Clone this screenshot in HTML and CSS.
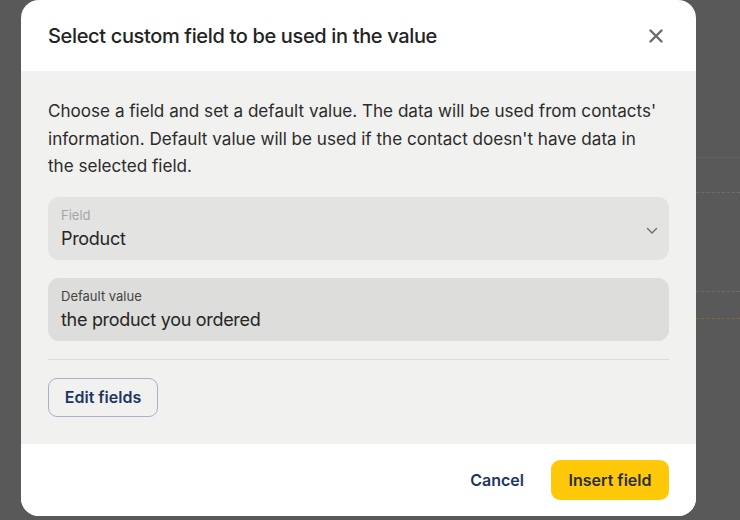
FILE: index.html
```html
<!DOCTYPE html>
<html lang="en">
<head>
<meta charset="utf-8">
<title>Select custom field</title>
<link rel="stylesheet" href="styles.css">
</head>
<body>
<div class="page">
  <div class="line solid l1"></div>
  <div class="line dashed l2"></div>
  <div class="line dashed l3"></div>
  <div class="line dashed orange l4"></div>
</div>

<div class="modal" role="dialog" aria-labelledby="modal-title">
  <header class="modal-header">
    <h2 id="modal-title" class="modal-title">Select custom field to be used in the value</h2>
    <button class="close-btn" aria-label="Close">
      <svg width="14" height="14" viewBox="0 0 14 14" aria-hidden="true">
        <path d="M1.5 1.5 L12.5 12.5 M12.5 1.5 L1.5 12.5" stroke="#6b6b6b" stroke-width="2.4" stroke-linecap="round" fill="none"/>
      </svg>
    </button>
  </header>

  <div class="modal-body">
    <p class="intro">Choose a field and set a default value. The data will be used from contacts' information. Default value will be used if the contact doesn't have data in the selected field.</p>

    <div class="input-box select-box">
      <div class="input-content">
        <span class="input-label muted">Field</span>
        <span class="input-value">Product</span>
      </div>
      <svg class="chevron" width="12" height="8" viewBox="0 0 12 8" aria-hidden="true">
        <path d="M1.5 1.5 L6 6 L10.5 1.5" stroke="#6e6e6e" stroke-width="1.4" stroke-linecap="round" stroke-linejoin="round" fill="none"/>
      </svg>
    </div>

    <div class="input-box text-box">
      <div class="input-content">
        <span class="input-label">Default value</span>
        <span class="input-value">the product you ordered</span>
      </div>
    </div>

    <div class="divider"></div>

    <div class="body-actions">
      <button class="btn-outline">Edit fields</button>
    </div>
  </div>

  <footer class="modal-footer">
    <button class="btn-text">Cancel</button>
    <button class="btn-primary">Insert field</button>
  </footer>
</div>
</body>
</html>
```

FILE: styles.css
```css
* {
  box-sizing: border-box;
}

html, body {
  margin: 0;
  padding: 0;
}

body {
  width: 740px;
  height: 520px;
  overflow: hidden;
  background: #595959;
  font-family: Inter, "Noto Sans", "Liberation Sans", sans-serif;
  position: relative;
}

.page {
  display: flex;
  flex-direction: column;
  padding-left: 600px;
}

.line {
  height: 1px;
  width: 140px;
}

.line.solid {
  background: #606060;
}

.line.dashed {
  border-top: 1px dashed #6e6e6e;
}

.line.dashed.orange {
  border-top-color: #7d6a36;
}

.l1 { margin-top: 157px; }
.l2 { margin-top: 34px; }
.l3 { margin-top: 98px; }
.l4 { margin-top: 26px; }

.modal {
  position: absolute;
  left: 21px;
  top: 0;
  width: 675px;
  height: 516px;
  background: #fff;
  border-radius: 18px;
  overflow: hidden;
  display: flex;
  flex-direction: column;
}

.modal-header {
  height: 71px;
  padding: 0 27px;
  display: flex;
  align-items: center;
  justify-content: space-between;
  flex-shrink: 0;
}

.modal-title {
  margin: 0;
  font-size: 20px;
  font-weight: 500;
  color: #232323;
  letter-spacing: -0.35px;
}

.close-btn {
  border: 0;
  background: none;
  padding: 0;
  width: 14px;
  height: 14px;
  margin-right: 6px;
  display: flex;
  cursor: pointer;
}

.modal-body {
  background: #f1f1ef;
  padding: 26px 27px 27px;
  display: flex;
  flex-direction: column;
  flex-shrink: 0;
}

.intro {
  margin: 0 0 17px;
  max-width: 612px;
  font-size: 17.1px;
  line-height: 27.5px;
  color: #2b2b2b;
}

.input-box {
  height: 63px;
  border-radius: 11px;
  padding: 10px 11px 0 13px;
  display: flex;
  align-items: flex-start;
  justify-content: space-between;
}

.select-box {
  background: #e3e3e1;
  margin-bottom: 18px;
}

.text-box {
  background: #dddddb;
}

.input-content {
  display: flex;
  flex-direction: column;
  gap: 3px;
}

.input-label {
  font-size: 13px;
  line-height: 16px;
  color: #444;
}

.input-label.muted {
  color: #a6a6a6;
}

.input-value {
  font-size: 18px;
  line-height: 26px;
  color: #262626;
  letter-spacing: -0.3px;
}

.chevron {
  margin-top: 20px;
}

.divider {
  height: 1px;
  background: #dcdcda;
  margin: 18px 0;
}

.body-actions {
  display: flex;
}

.btn-outline {
  width: 110px;
  height: 39px;
  border: 1px solid #a7b2c8;
  border-radius: 9px;
  background: transparent;
  font-family: inherit;
  font-size: 16px;
  font-weight: 600;
  color: #1d3564;
  padding: 0;
}

.modal-footer {
  flex: 1;
  background: #fff;
  padding: 0 27px;
  display: flex;
  align-items: center;
  justify-content: flex-end;
  gap: 27px;
}

.btn-text {
  border: 0;
  background: none;
  padding: 0;
  font-family: inherit;
  font-size: 16px;
  font-weight: 600;
  color: #1d3564;
}

.btn-primary {
  width: 118px;
  height: 40px;
  border: 0;
  border-radius: 9px;
  background: #ffc909;
  font-family: inherit;
  font-size: 16px;
  font-weight: 600;
  color: #2a2d3a;
  padding: 0;
}
```
